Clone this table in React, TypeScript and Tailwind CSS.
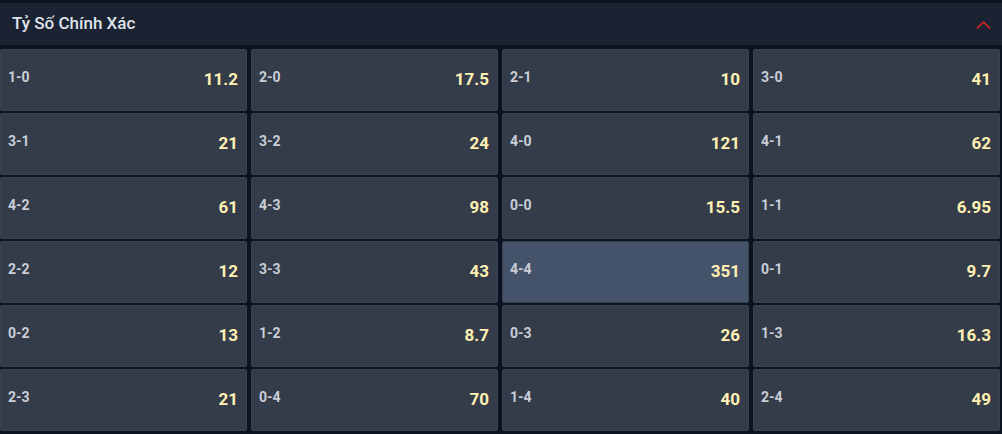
import React from 'react';

const odds: [string, string][] = [
  ['1-0', '11.2'], ['2-0', '17.5'], ['2-1', '10'], ['3-0', '41'],
  ['3-1', '21'], ['3-2', '24'], ['4-0', '121'], ['4-1', '62'],
  ['4-2', '61'], ['4-3', '98'], ['0-0', '15.5'], ['1-1', '6.95'],
  ['2-2', '12'], ['3-3', '43'], ['4-4', '351'], ['0-1', '9.7'],
  ['0-2', '13'], ['1-2', '8.7'], ['0-3', '26'], ['1-3', '16.3'],
  ['2-3', '21'], ['0-4', '70'], ['1-4', '40'], ['2-4', '49'],
];

const App = () => {
  return (
    <div className="w-[1002px] h-[434px] overflow-hidden bg-[#0b1220] pt-[3px] font-['Roboto',sans-serif]">
      <div className="h-[42px] bg-[#1b2333] flex items-center justify-between pl-[12px] pr-[11px]">
        <span className="text-[17px] font-medium text-[#dfe3ea]">Tỷ Số Chính Xác</span>
        <svg width="15" height="10" viewBox="0 0 15 10" className="mt-[2px]">
          <path d="M1 8.5 L7.5 2 L14 8.5" fill="none" stroke="#e0262b" strokeWidth="1.5" />
        </svg>
      </div>
      <div className="grid grid-cols-4 gap-x-[4px] gap-y-[2px] w-[1000px] mt-[4px]">
        {odds.map(([score, value]) => (
          <div
            key={score}
            className={`h-[62px] rounded-[2px] flex items-center justify-between pl-[7px] pr-[8px] border border-[#3b4352] ${
              score === '4-4' ? 'bg-[#45536a]' : 'bg-[#343c49]'
            }`}
          >
            <span className="text-[14px] font-bold text-[#c9ced8] -mt-[5px]">{score}</span>
            <span className="text-[17px] font-bold text-[#fff0b3]">{value}</span>
          </div>
        ))}
      </div>
    </div>
  );
};

export default App;
